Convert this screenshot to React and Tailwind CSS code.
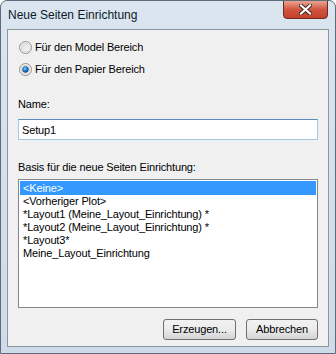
import React, { useState } from "react";

const font = { fontFamily: '"Liberation Sans", Arial, sans-serif' };

const Radio = ({ checked }) => (
  <svg width="13" height="13" viewBox="0 0 13 13" className="shrink-0">
    <defs>
      <linearGradient id="ringFill" x1="0" y1="0" x2="1" y2="1">
        <stop offset="0" stopColor="#d8d8d8" />
        <stop offset="1" stopColor="#fafafa" />
      </linearGradient>
      <radialGradient id="dotFill" cx="0.4" cy="0.35" r="0.7">
        <stop offset="0" stopColor="#8fd4ff" />
        <stop offset="0.5" stopColor="#1f7fd0" />
        <stop offset="1" stopColor="#0a3d7a" />
      </radialGradient>
    </defs>
    <circle cx="6.5" cy="6.5" r="6" fill="#f4f4f4" stroke="#8e8f8f" />
    <circle cx="6.5" cy="6.5" r="4.3" fill="url(#ringFill)" stroke="#c8c8c8" strokeWidth="0.6" />
    {checked && <circle cx="6.5" cy="6.5" r="3" fill="url(#dotFill)" stroke="#1b4e86" strokeWidth="0.5" />}
  </svg>
);

const items = [
  "<Keine>",
  "<Vorheriger Plot>",
  "*Layout1 (Meine_Layout_Einrichtung) *",
  "*Layout2 (Meine_Layout_Einrichtung) *",
  "*Layout3*",
  "Meine_Layout_Einrichtung",
];

const App = () => {
  // selected option + list entry
  const [mode, setMode] = useState("papier");
  const [selected, setSelected] = useState(0);
  const [name, setName] = useState("Setup1");

  return (
    <div
      style={font}
      className="w-[336px] h-[354px] flex flex-col border border-[#5f6b78] rounded-t-[7px] bg-gradient-to-b from-[#dbe5f0] to-[#cfdbe8] text-[11px] tracking-[-0.15px] text-black overflow-hidden"
    >
      {/* ---------- Title bar ---------- */}
      <div className="h-[28px] flex items-start justify-between pl-[7px] pr-[7px]">
        <span className="mt-[6px] leading-[16px] text-[12px] tracking-normal text-[#0c1a2a]">Neue Seiten Einrichtung</span>
        <div className="w-[45px] h-[19px] -mt-px rounded-b-[4px] border border-[#6b2a22] bg-gradient-to-b from-[#e8a493] via-[#d2553f] to-[#c4402b] flex items-center justify-center">
          <svg width="13" height="11" viewBox="0 0 13 11">
            <path d="M2 1.5 L11 9.5 M11 1.5 L2 9.5" stroke="#3b2420" strokeWidth="4" strokeLinecap="square" />
            <path d="M2 1.5 L11 9.5 M11 1.5 L2 9.5" stroke="#ffffff" strokeWidth="2.2" strokeLinecap="square" />
          </svg>
        </div>
      </div>

      {/* ---------- Content ---------- */}
      <div className="mx-[6px] mb-[6px] flex-1 border border-[#8a97a6] bg-[#f0f0f0] flex flex-col pl-[10px] pr-[9px] pt-[9px]">
        <label className="h-[16px] flex items-center gap-[2px] pl-px" onClick={() => setMode("model")}>
          <Radio checked={mode === "model"} />
          <span className="ml-[1px]">Für den Model Bereich</span>
        </label>
        <label className="mt-[6px] h-[16px] flex items-center gap-[2px] pl-px" onClick={() => setMode("papier")}>
          <Radio checked={mode === "papier"} />
          <span className="ml-[1px]">Für den Papier Bereich</span>
        </label>

        <p className="mt-[20px] leading-[15px]">Name:</p>
        <input
          value={name}
          onChange={(e) => setName(e.target.value)}
          style={font}
          className="mt-[7px] w-[300px] h-[21px] border border-[#a4c9e3] border-t-[#5a8bbf] bg-white px-[3px] text-[11px] tracking-[-0.15px] outline-none"
        />

        <p className="mt-[20px] leading-[15px]">Basis für die neue Seiten Einrichtung:</p>
        <div className="mt-[4px] w-[300px] h-[129px] border border-[#828790] bg-white p-px flex flex-col">
          {items.map((item, index) => (
            <div
              key={index}
              onClick={() => setSelected(index)}
              className={`h-[13px] leading-[13px] pl-[3px] whitespace-pre ${
                selected === index ? "bg-[#3399ff] text-white h-[14px] leading-[14px]" : ""
              }`}
            >
              {item}
            </div>
          ))}
        </div>

        {/* ---------- Buttons ---------- */}
        <div className="mt-[11px] w-[300px] flex justify-end gap-[10px]">
          <button
            style={font}
            className="w-[73px] h-[21px] rounded-[3px] border border-[#707070] bg-gradient-to-b from-[#f2f2f2] via-[#ebebeb] to-[#d3d3d3] text-[11px] tracking-[-0.15px]"
          >
            Erzeugen...
          </button>
          <button
            style={font}
            className="w-[72px] h-[21px] rounded-[3px] border border-[#707070] bg-gradient-to-b from-[#f2f2f2] via-[#ebebeb] to-[#d3d3d3] text-[11px] tracking-[-0.15px]"
          >
            Abbrechen
          </button>
        </div>
      </div>
    </div>
  );
};

export default App;
